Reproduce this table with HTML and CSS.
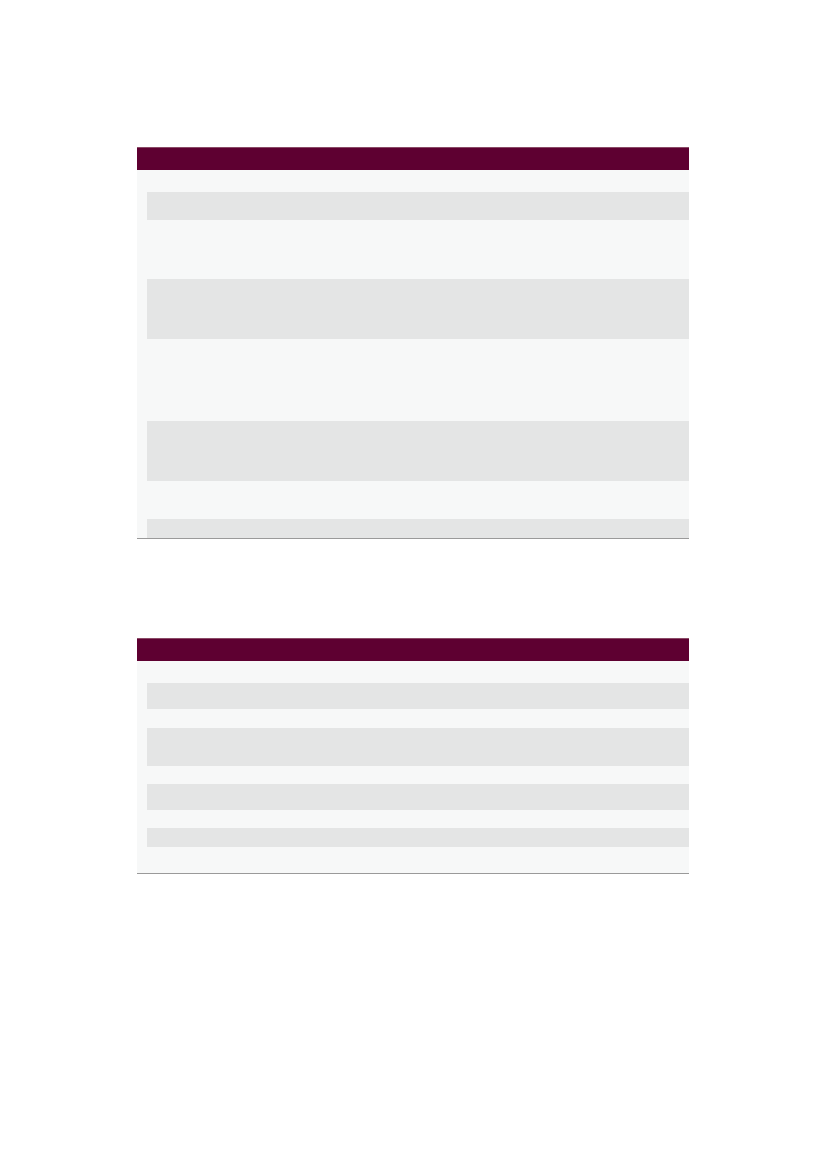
FILE: index.html
```html
<!DOCTYPE html>
<html lang="en">
<head>
<meta charset="utf-8">
<title>Tables</title>
<link rel="stylesheet" href="styles.css">
</head>
<body>
<main class="page">
  <section class="tbl">
    <div class="thead"></div>
    <div class="row h22"><div class="lead"></div><div class="cell"></div></div>
    <div class="row alt h28"><div class="lead"></div><div class="cell"></div></div>
    <div class="row h59"><div class="lead"></div><div class="cell"></div></div>
    <div class="row alt h60"><div class="lead"></div><div class="cell"></div></div>
    <div class="row h82"><div class="lead"></div><div class="cell"></div></div>
    <div class="row alt h60"><div class="lead"></div><div class="cell"></div></div>
    <div class="row h38"><div class="lead"></div><div class="cell"></div></div>
    <div class="row alt h19"><div class="lead"></div><div class="cell"></div></div>
  </section>
  <section class="tbl second">
    <div class="thead"></div>
    <div class="row h22"><div class="lead"></div><div class="cell"></div></div>
    <div class="row alt h26"><div class="lead"></div><div class="cell"></div></div>
    <div class="row h19"><div class="lead"></div><div class="cell"></div></div>
    <div class="row alt h38"><div class="lead"></div><div class="cell"></div></div>
    <div class="row h18"><div class="lead"></div><div class="cell"></div></div>
    <div class="row alt h26"><div class="lead"></div><div class="cell"></div></div>
    <div class="row h18"><div class="lead"></div><div class="cell"></div></div>
    <div class="row alt h19"><div class="lead"></div><div class="cell"></div></div>
    <div class="row h26"><div class="lead"></div><div class="cell"></div></div>
  </section>
</main>
</body>
</html>
```

FILE: styles.css
```css
html, body {
  margin: 0;
  padding: 0;
  background: #ffffff;
  font-family: "Liberation Sans", Arial, sans-serif;
}
.page {
  padding-top: 147px;
  display: flex;
  flex-direction: column;
}
.tbl {
  width: 552px;
  margin-left: 137px;
  background: #f7f8f8;
  border-bottom: 1px solid #9a9a9a;
  display: flex;
  flex-direction: column;
}
.tbl.second {
  margin-top: 99px;
}
.thead {
  height: 23px;
  background: #5e0031;
  border-top: 1px solid #8a4a66;
  box-sizing: border-box;
}
.row {
  display: flex;
}
.lead {
  width: 10px;
  flex: none;
}
.cell {
  flex: 1;
}
.row.alt .cell {
  background: #e4e5e5;
}
.h18 { height: 18px; }
.h19 { height: 19px; }
.h22 { height: 22px; }
.h26 { height: 26px; }
.h28 { height: 28px; }
.h38 { height: 38px; }
.h59 { height: 59px; }
.h60 { height: 60px; }
.h82 { height: 82px; }
```
